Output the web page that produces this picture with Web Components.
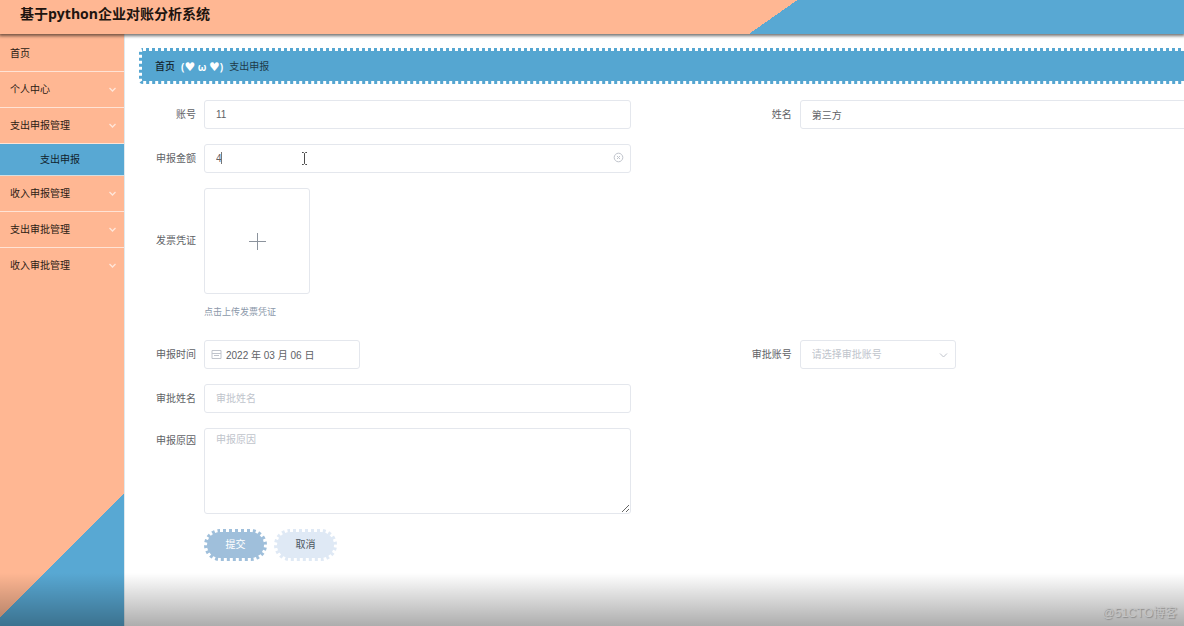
<!DOCTYPE html>
<html lang="zh-CN">
<head>
<meta charset="utf-8">
<title>基于python企业对账分析系统</title>
<style>
html, body { height: 100%; }
body { margin: 0; background: #fff; font: 10px/16px "Liberation Sans", "Noto Sans CJK SC", sans-serif; color: #606266; overflow: hidden; }
</style>
</head>
<body>
<finance-app></finance-app>
<script>
const define = (name, html, setup) => customElements.define(name, class extends HTMLElement {
  constructor() {
    super();
    this.attachShadow({ mode: 'open', delegatesFocus: true }).innerHTML = html;
  }
  connectedCallback() { if (setup) setup(this, this.shadowRoot); }
});

define('app-header', `
<style>
:host { display: flex; align-items: center; height: 34px; padding: 0 20px; box-sizing: border-box; position: relative; z-index: 1;
  background: linear-gradient(145deg, #ffb793 64.7%, #58a8d3 64.7%); box-shadow: 0 1px 3px 1px rgba(0,0,0,.55); }
h1 { margin: 0 0 6px; font: bold 14px/20px "Open Sans", "Noto Sans CJK SC", sans-serif; color: #20140f; }
</style>
<h1><slot></slot></h1>`);

define('menu-item', `
<style>
:host { display: block; border-bottom: 1px solid #ffe3d5; }
:host(:last-of-type) { border-bottom-color: transparent; }
a { display: flex; align-items: center; justify-content: space-between; height: 35px; padding: 0 7px 0 10px; color: #2b1b14; text-decoration: none; }
:host([sub]) { border-bottom-color: #d3dfe2; }
:host([sub]) a { height: 31px; padding: 0 0 0 40px; background: #58a8d3; color: #10222c; }
svg { display: none; width: 9px; height: 9px; fill: none; stroke: #ffe6da; stroke-width: 1.3; }
:host([expandable]) svg { display: block; }
</style>
<a href="#"><slot></slot><svg viewBox="0 0 9 9"><path d="M1.5 3 4.5 6 7.5 3"/></svg></a>`);

define('side-menu', `
<style>
:host { display: block; width: 124px; flex: none; padding-top: 1px; box-sizing: border-box; box-shadow: 1px 0 #dfe9ee;
  background: linear-gradient(315deg, #58a8d3 94px, #ffb793 94px); }
nav { padding-top: 1px; }
</style>
<nav><slot></slot></nav>`);

define('bread-crumb', `
<style>
:host { display: block; }
nav { display: flex; align-items: center; gap: 6px; height: 36px; padding: 1px 13px 0; box-sizing: border-box; background: #55a6d1; border: 3px dotted #fff; border-radius: 4px; color: #1e3a49; }
a { color: #14242d; font-weight: 500; text-decoration: none; }
b { color: #fff; font: bold 10px/16px "Noto Sans", "DejaVu Sans", sans-serif; }
b span { font: 12px/12px "DejaVu Sans", sans-serif; }
</style>
<nav><a href="#">首页</a><b>(<span>♥</span> ω <span>♥</span>)</b><span><slot></slot></span></nav>`);

define('form-item', `
<style>
:host { display: grid; grid-template-columns: 57px minmax(0, 1fr); column-gap: 8px; }
label { text-align: right; line-height: 29px; }
:host([tall]) label { line-height: 105px; }
:host([area]) label { line-height: 25px; }
.box { position: relative; margin-right: 104px; }
:host([short]) .box { width: 156px; margin: 0; }
input, textarea, select, .upload { box-sizing: border-box; border: 1px solid #e4e7ed; border-radius: 3px; background: #fff; font: inherit; color: #606266; outline: 0; margin: 0; }
input, select, textarea { display: block; width: 100%; height: 29px; padding: 0 11px; }
input[type=text].dated { padding-left: 21px; }
textarea { height: 86px; padding: 3px 11px; resize: vertical; }
::placeholder { color: #c0c4cc; opacity: 1; }
select { appearance: none; color: #c0c4cc; }
.upload { display: grid; place-items: center; width: 106px; height: 106px; padding: 0; cursor: pointer; }
.tip { margin-top: 10px; height: 16px; font-size: 9px; color: #8b98aa; margin-bottom: 5px; }
.box > svg, i { position: absolute; pointer-events: none; }
svg { fill: none; stroke: #c0c4cc; }
.clear { right: 7px; top: 8px; }
.cal { left: 7px; top: 9px; }
.down { right: 8px; top: 11px; }
.pointer { left: 97px; top: 8px; stroke: #4b4b4b; }
i { left: 17px; top: 8px; width: 1px; height: 12px; background: #777; }
</style>
<label for="f"></label><div class="box"></div>`, (el, root) => {
  const kind = el.getAttribute('kind') || 'text';
  const value = el.getAttribute('value') || '';
  const hint = el.getAttribute('placeholder') || '';
  root.querySelector('label').textContent = el.getAttribute('label');
  const text = cls => `<input id="f" type="text" class="${cls}" value="${value}" placeholder="${hint}">`;
  root.querySelector('.box').innerHTML = {
    text: text(''),
    amount: text('') + `<i></i>
      <svg class="pointer" width="7" height="13" viewBox="0 0 7 13"><path d="M1 .5h1.500l1 1 1-1H6M3.500 1.500v10M1 12.500h1.500l1-1 1 1H6"/></svg>
      <svg class="clear" width="11" height="11" viewBox="0 0 11 11"><circle cx="5.500" cy="5.500" r="4.300"/><path d="m4 4 3 3m0-3L4 7"/></svg>`,
    date: text('dated') + `<svg class="cal" width="11" height="11" viewBox="0 0 11 11"><path d="M1 1.500h9v8H1zM1 4.500h9M3 6.500h5"/></svg>`,
    select: `<select id="f"><option>${hint}</option></select><svg class="down" width="9" height="9" viewBox="0 0 9 9"><path d="M1 2.500 4.500 6 8 2.500"/></svg>`,
    area: `<textarea id="f" placeholder="${hint}"></textarea>`,
    upload: `<button id="f" class="upload" type="button" aria-label="${hint}"><svg width="17" height="17" viewBox="0 0 17 17" style="stroke:#8c939d"><path d="M8.500 0v17M0 8.500h17"/></svg></button><div class="tip">${hint}</div>`
  }[kind];
});

define('form-button', `
<style>
:host { display: block; }
button { width: 63px; height: 32px; padding: 0; border: 3px dotted #fff; border-radius: 16px; background: #dfe9f5; color: #4c5560; font: inherit; }
:host([primary]) button { background: #9fbfdb; color: #fff; }
</style>
<button type="button"><slot></slot></button>`);

define('expense-form', `
<style>
:host { display: block; }
form { display: grid; grid-template-columns: 57% 57%; row-gap: 15px; }
.solo { grid-column: 1; }
.actions { display: flex; gap: 7px; padding-left: 65px; grid-column: 1; }
</style>
<form>
<form-item label="账号" value="11"></form-item>
<form-item label="姓名" value="第三方"></form-item>
<form-item class="solo" kind="amount" label="申报金额" value="4"></form-item>
<form-item class="solo" tall kind="upload" label="发票凭证" placeholder="点击上传发票凭证"></form-item>
<form-item class="solo" short kind="date" label="申报时间" value="2022 年 03 月 06 日"></form-item>
<form-item short kind="select" label="审批账号" placeholder="请选择审批账号"></form-item>
<form-item class="solo" label="审批姓名" placeholder="审批姓名"></form-item>
<form-item class="solo" area kind="area" label="申报原因" placeholder="申报原因"></form-item>
<div class="actions"><form-button primary>提交</form-button><form-button>取消</form-button></div>
</form>`);

define('video-shade', `
<style>
:host { position: absolute; left: 0; right: 0; bottom: 0; height: 53px; z-index: 2; pointer-events: none; display: flex; align-items: flex-end; justify-content: flex-end;
  padding: 0 7px 3px; box-sizing: border-box; background: linear-gradient(rgba(0,0,0,0), rgba(0,0,0,.32)); }
span { font-size: 12px; line-height: 20px; color: #c4c4c4; text-shadow: 1px 1px 1px #8c8c8c; }
</style>
<span><slot></slot></span>`);

define('finance-app', `
<style>
:host { display: flex; flex-direction: column; min-height: 100%; height: 100vh; position: relative; }
.body { display: flex; flex: 1; min-height: 0; }
main { flex: 1; min-width: 0; padding: 14px 0 0 15px; overflow: hidden; }
bread-crumb { width: 114%; margin-bottom: 16px; }
</style>
<app-header>基于python企业对账分析系统</app-header>
<div class="body">
<side-menu>
<menu-item>首页</menu-item>
<menu-item expandable>个人中心</menu-item>
<menu-item expandable>支出申报管理</menu-item>
<menu-item sub>支出申报</menu-item>
<menu-item expandable>收入申报管理</menu-item>
<menu-item expandable>支出审批管理</menu-item>
<menu-item expandable>收入审批管理</menu-item>
</side-menu>
<main><bread-crumb>支出申报</bread-crumb><expense-form></expense-form></main>
</div>
<video-shade>@51CTO博客</video-shade>`);
</script>
</body>
</html>
